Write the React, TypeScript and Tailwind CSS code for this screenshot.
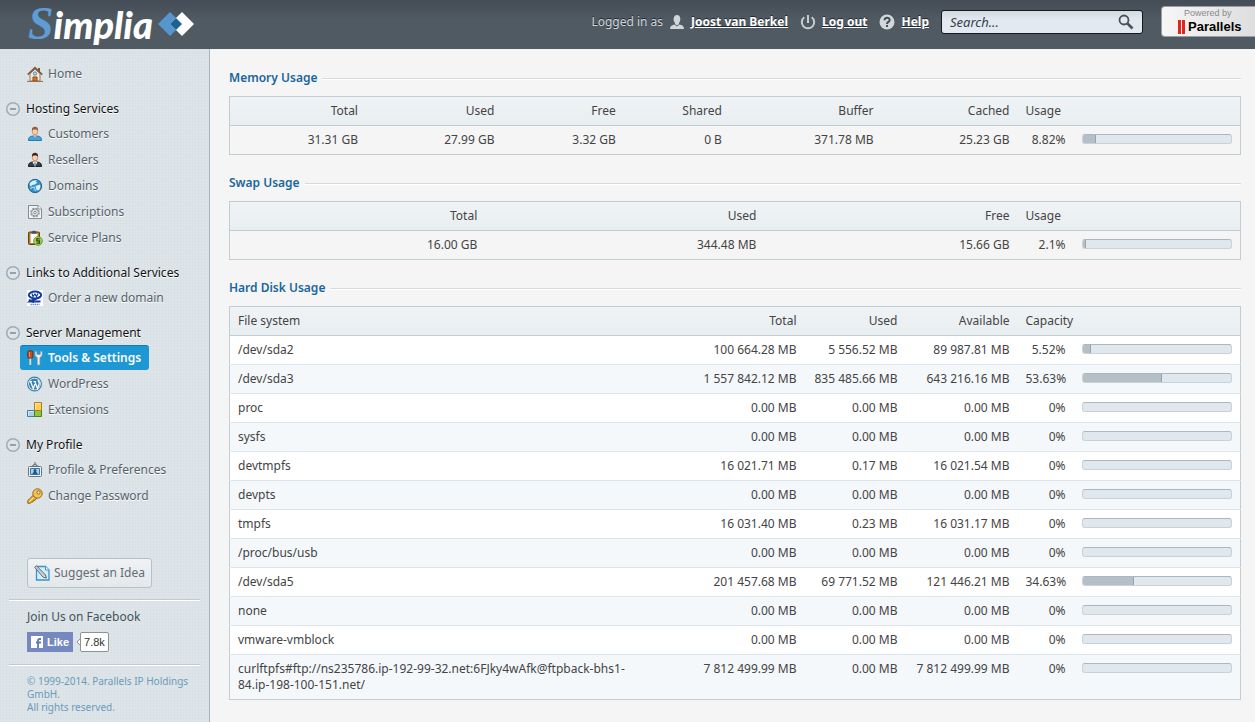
import { ReactNode } from 'react';

interface NavItem {
  label: string;
  icon: ReactNode;
  active?: boolean;
}

interface NavGroup {
  title: string;
  items: NavItem[];
}

// --- Icons ---
const Icon = ({ children }: { children: ReactNode }) => (
  <svg viewBox="0 0 16 16" className="size-4 shrink-0" aria-hidden="true">{children}</svg>
);

const HomeIcon = () => (
  <Icon>
    <path d="M3 7.500 8 3l5 4.500V15H3z" fill="#f3ead6" stroke="#9a7b5c" />
    <path d="M12 2v4" stroke="#7a5a45" strokeWidth="2" />
    <path d="M.8 8.600 8 1.800l7.200 6.800" fill="none" stroke="#7d5b45" strokeWidth="1.800" />
    <circle cx="8" cy="7.500" r="1.600" fill="#bfe0f5" stroke="#3d86b8" />
    <path d="M6 15v-4h4v4z" fill="#d9792e" stroke="#8a4717" />
    <path d="M0 15.400h16" stroke="#8c6c56" />
  </Icon>
);

const PersonIcon = ({ body, edge, hair, suit }: { body: string; edge: string; hair: string; suit?: boolean }) => (
  <Icon>
    <path d="M1.500 14.500c-.3-3 1.200-4 4-4.500h5c2.800.5 4.300 1.500 4 4.500z" fill={body} stroke={edge} />
    {suit && <path d="M5.500 10 8 14.500l2.500-4.500z" fill="#fff" />}
    {suit && <path d="M8 10.500v4" stroke="#3f8fd0" strokeWidth="1.500" />}
    <path d="M6.500 7.500h3v2.800L8 11.500l-1.500-1.200z" fill="#eab391" />
    <ellipse cx="8" cy="5" rx="2.800" ry="3.800" fill="#f8cdb0" stroke="#b77e60" strokeWidth=".7" />
    <path d="M5 4.800C4.600 2 6 .8 8 .8s3.400 1.200 3 4C10 3 6 3 5 4.800z" fill={hair} />
  </Icon>
);

const GlobeIcon = () => (
  <Icon>
    <circle cx="8" cy="8" r="6.700" fill="#2f8fca" stroke="#2c6287" />
    <path d="M2.500 6C4 3 7 1.800 10 2.500L8.500 4l2 .5L8 6.500 5 7 4 9zM8.500 8l4.500-1.500c.8 2.500 0 4.500-1.500 6L9.500 12z" fill="#d9f1fb" />
    <path d="M3 10.500 7 9l1.500 4" fill="none" stroke="#a5dbf3" strokeWidth="1.200" />
  </Icon>
);

const SubscriptionIcon = () => (
  <Icon>
    <path d="M1.500 1.500H11L14.500 5v9.500h-13z" fill="#f2f3f4" stroke="#858d93" />
    <path d="M11 1.500V5h3.500" fill="#fff" stroke="#858d93" />
    <circle cx="8" cy="8.500" r="4.200" fill="none" stroke="#8a9298" strokeWidth="1.200" strokeDasharray="2 1.300" />
    <circle cx="8" cy="8.500" r="3.500" fill="#e4e8ea" stroke="#8a9298" />
    <circle cx="8" cy="8.500" r="1.300" fill="#fff" stroke="#7d868c" />
  </Icon>
);

const PlanIcon = () => (
  <Icon>
    <rect x="1.500" y="2" width="11" height="12.500" rx="1" fill="#b5742a" stroke="#6d4315" />
    <path d="M3.500 3.500h7V13h-7z" fill="#fafafa" />
    <path d="M4.500 3.800V2L6 .8h2L9.500 2v1.800z" fill="#4c5358" />
    <circle cx="11" cy="11" r="4.300" fill="#a4d355" stroke="#6c9a2b" />
    <path d="M12.800 8.800H9.800v2h2.700v2.300H9.500" fill="none" stroke="#27480c" strokeWidth="1.200" />
  </Icon>
);

const OrderIcon = () => (
  <Icon>
    <path d="M0 0h16v16H0z" fill="#fff" />
    <ellipse cx="8" cy="5" rx="6.200" ry="3.500" fill="none" stroke="#113c98" strokeWidth="2" />
    <path d="M13.500 6.500C11 9.500 6 9 2.500 11.500h11M2 9.500c1 1.500 3 2.500 5 2.500" fill="none" stroke="#113c98" strokeWidth="1.800" />
    <path d="m5 3.500 1 3L8 4l1.500 2.500 1.500-3" fill="none" stroke="#113c98" strokeWidth="1.200" />
    <path d="M3.500 14.500h9" stroke="#6f93ce" strokeWidth="1.500" strokeDasharray="1.500 .5" />
  </Icon>
);

const ToolsIcon = () => (
  <Icon>
    <rect x=".8" y=".8" width="5" height="7.500" rx="1.500" fill="#c64b22" stroke="#772812" />
    <path d="M2.500 2v5" stroke="#ef8a62" />
    <path d="M3.300 8.500v6.500" stroke="#d8dde0" strokeWidth="1.800" />
    <path d="M8.500 1C7.300 4 8 6.500 10.300 7.500V15h2.600V7.500c2.300-1 3-3.500 1.800-6.500l-1.400.5V4.500h-3.400v-3z" fill="#eef1f3" stroke="#8b969e" strokeWidth=".7" />
  </Icon>
);

const WordPressIcon = () => (
  <Icon>
    <circle cx="7.500" cy="8" r="6.900" fill="#e8f3fa" stroke="#3b80ae" strokeWidth="1.200" />
    <circle cx="7.500" cy="8" r="5.500" fill="#3b80ae" />
    <path d="M2.500 5.500H5M6.500 5.500H9M3.500 5.500l2.800 7L8 8M7.800 5.500l2.700 7 1.800-5c.4-1.200-1.500-2.200-1-3.500" fill="none" stroke="#fff" strokeWidth="1.200" />
  </Icon>
);

const ExtensionsIcon = () => (
  <Icon>
    <path d="M.5 8.500h7v6h-7z" fill="#a5d0ec" stroke="#477ba0" />
    <path d="M7.500 8.500h7v6h-7z" fill="#91c43d" stroke="#527d1c" />
    <path d="M7.500.5h7v8h-7z" fill="#fbcd59" stroke="#a97f21" />
    <path d="M8.500 7.500v-6h5M1.500 13.500v-4h5" fill="none" stroke="#fff" strokeOpacity=".5" />
  </Icon>
);

const ProfileIcon = () => (
  <Icon>
    <path d="M8 0v3M5 4.500 8 2l3 2.500" fill="none" stroke="#69747b" strokeWidth="1.200" />
    <rect x="1.500" y="4.500" width="13" height="10" rx="1" fill="#eaf0f3" stroke="#69747b" />
    <path d="M3.500 6.500h9v6h-9z" fill="#9fd0f0" stroke="#3976a3" />
    <path d="M5.500 12c0-1.200.8-1.700 1.700-2a1.500 1.500 0 1 1 1.600 0c1 .3 1.700.8 1.700 2z" fill="#1f4f7c" />
  </Icon>
);

const KeyIcon = () => (
  <Icon>
    <path d="M6 7.500.8 12.500v2.700h2.700l1-1.300H6l.3-1.600H8l1.500-2z" fill="#f3b73c" stroke="#8d5d10" />
    <circle cx="10.500" cy="5.500" r="4.700" fill="#f7c34c" stroke="#95651a" />
    <circle cx="11.500" cy="4.500" r="1.600" fill="#e6eef2" stroke="#95651a" />
    <path d="m2 14 5-5" stroke="#fce3a0" />
  </Icon>
);

const IdeaIcon = () => (
  <Icon>
    <path d="M2.500 1.500h9L15 5v10H2.500z" fill="#cfeeff" stroke="#3c93c8" strokeWidth="1.300" />
    <path d="M11.500 1.500V5H15" fill="#fff" stroke="#3c93c8" />
    <path d="m.7 2.300 1.800-1.500 9 9.200.8 3L9 12z" fill="#e8ebec" stroke="#495157" strokeWidth=".9" />
    <path d="m2.500 2.500 8 8.500" stroke="#8c9499" strokeWidth=".7" />
  </Icon>
);

const CollapseIcon = () => (
  <svg viewBox="0 0 16 16" className="size-4" aria-hidden="true">
    <circle cx="8" cy="8" r="6.300" fill="#dde5e9" stroke="#9badb7" strokeWidth="1.500" />
    <path d="M5 8h6" stroke="#7b8c96" strokeWidth="1.500" />
  </svg>
);

const navGroups: NavGroup[] = [
  {
    title: 'Hosting Services',
    items: [
      { label: 'Customers', icon: <PersonIcon body="#48a3da" edge="#2c78a8" hair="#9a5c32" /> },
      { label: 'Resellers', icon: <PersonIcon body="#3a3d41" edge="#1d1f22" hair="#46291a" suit /> },
      { label: 'Domains', icon: <GlobeIcon /> },
      { label: 'Subscriptions', icon: <SubscriptionIcon /> },
      { label: 'Service Plans', icon: <PlanIcon /> },
    ],
  },
  {
    title: 'Links to Additional Services',
    items: [{ label: 'Order a new domain', icon: <OrderIcon /> }],
  },
  {
    title: 'Server Management',
    items: [
      { label: 'Tools & Settings', icon: <ToolsIcon />, active: true },
      { label: 'WordPress', icon: <WordPressIcon /> },
      { label: 'Extensions', icon: <ExtensionsIcon /> },
    ],
  },
  {
    title: 'My Profile',
    items: [
      { label: 'Profile & Preferences', icon: <ProfileIcon /> },
      { label: 'Change Password', icon: <KeyIcon /> },
    ],
  },
];

const disks: [string, string, string, string, number][] = [
  ['/dev/sda2', '100 664.28', '5 556.52', '89 987.81', 5.52],
  ['/dev/sda3', '1 557 842.12', '835 485.66', '643 216.16', 53.63],
  ['proc', '0.00', '0.00', '0.00', 0],
  ['sysfs', '0.00', '0.00', '0.00', 0],
  ['devtmpfs', '16 021.71', '0.17', '16 021.54', 0],
  ['devpts', '0.00', '0.00', '0.00', 0],
  ['tmpfs', '16 031.40', '0.23', '16 031.17', 0],
  ['/proc/bus/usb', '0.00', '0.00', '0.00', 0],
  ['/dev/sda5', '201 457.68', '69 771.52', '121 446.21', 34.63],
  ['none', '0.00', '0.00', '0.00', 0],
  ['vmware-vmblock', '0.00', '0.00', '0.00', 0],
  ['curlftpfs#ftp://ns235786.ip-192-99-32.net:6FJky4wAfk@ftpback-bhs1-84.ip-198-100-151.net/', '7 812 499.99', '0.00', '7 812 499.99', 0],
];

const NavLink = ({ item }: { item: NavItem }) => (
  <a
    href="#"
    className={`flex h-[25px] w-fit items-center gap-[5px] rounded-[3px] pr-2 pl-[7px] whitespace-nowrap ${
      item.active
        ? 'border-t border-[#1579b4] bg-[#1e98d4] font-semibold text-white'
        : 'text-[#55616a] [text-shadow:0_1px_0_#fff]'
    }`}
  >
    {item.icon}
    {item.label}
  </a>
);

const UsageBar = ({ value }: { value: number }) => (
  <div className="h-2.5 w-full overflow-hidden rounded-[3px] border border-[#c9d2d9] border-t-[#acb7c0] bg-[#e0e7ed]">
    {value > 0 && (
      <div className="h-full border-r border-[#97a2ac] bg-[#b5bfc8]" style={{ width: `${value}%` }} />
    )}
  </div>
);

// Percentage followed by its bar, shared by all three tables
const UsageCell = ({ value }: { value: number }) => (
  <td className="px-2 py-1.5 align-top">
    <div className="flex items-start gap-4">
      <span className="w-10 text-right">{value}%</span>
      <div className="flex-1 pt-0.5"><UsageBar value={value} /></div>
    </div>
  </td>
);

const Section = ({ title, children }: { title: string; children: ReactNode }) => (
  <section className="mb-[18px]">
    <div className="mb-2 flex h-5 items-center gap-[5px]">
      <h2 className="font-semibold text-[#1a659e]">{title}</h2>
      <div className="mt-0.5 h-0.5 flex-1 border-t border-[#d8dadb] bg-white" />
    </div>
    {children}
  </section>
);

const tableClass = 'w-full table-fixed border-collapse border border-[#c1ccd3]';
const headClass = 'border-b border-[#c1ccd3] bg-gradient-to-b from-[#eff3f6] to-[#e9eef1]';
const thClass = 'px-2 py-1.5 text-right font-normal whitespace-nowrap';
const tdClass = 'px-2 py-1.5 text-right align-top whitespace-nowrap';

const Divider = () => <div className="mx-[9px] h-0.5 border-t border-[#bfcad0] bg-white" />;

const Header = () => (
  <header className="flex h-[49px] items-start justify-between bg-gradient-to-b from-[#444c56] to-[#505a63] to-40% text-[#d0d6da]">
    <a href="#" aria-label="Simplia" className="flex h-12 items-center gap-[5px] pl-7">
      <span className="flex items-baseline font-['Lato',sans-serif] text-[38px] leading-[44px] font-black text-white italic">
        <span className="font-['Liberation_Serif',serif] text-[46px] font-bold text-[#5f9cd6]">S</span>
        implia
      </span>
      <svg viewBox="0 0 36 24" className="h-6 w-9" aria-hidden="true">
        <path d="m12 0 12 12-12 12L0 12z" fill="#5796cc" />
        <path d="m24 0 12 12-12 12-12-12z" fill="#fff" />
        <path d="m18 6 6 6-6 6-6-6z" fill="#1d638f" />
      </svg>
    </a>
    <div className="flex items-start">
      <nav className="flex h-[43px] items-center whitespace-nowrap [text-shadow:0_-1px_0_#22282d]">
        <span>Logged in as</span>
        <svg viewBox="0 0 16 16" className="mx-1.5 size-4" aria-hidden="true">
          <path d="M1 15c0-3 2-4 5-4.500V9C3.500 6 4.500 1 8 1s4.500 5 2 8v1.500c3 .5 5 1.500 5 4.500z" fill="#d0d5d9" />
          <path d="m6 10.500 2 1.500 2-1.500" fill="none" stroke="#59626a" />
        </svg>
        <a href="#" className="font-bold text-white underline">Joost van Berkel</a>
        <svg viewBox="0 0 16 16" className="mr-1.5 ml-3 size-4" fill="none" stroke="#c6ccd1" strokeWidth="2" aria-hidden="true">
          <path d="M8 1v8M4.300 3.200a6.200 6.200 0 1 0 7.400 0" />
        </svg>
        <a href="#" className="font-bold text-white underline">Log out</a>
        <svg viewBox="0 0 16 16" className="mr-1.5 ml-3 size-4" aria-hidden="true">
          <circle cx="8" cy="8" r="7.500" fill="#d2d7db" />
          <path d="M5.500 6.300C5.500 3 10.700 3 10.700 6c0 2-2.700 1.800-2.700 4M8 11v2" fill="none" stroke="#424c55" strokeWidth="1.900" />
        </svg>
        <a href="#" className="font-bold text-white underline">Help</a>
      </nav>
      <div className="mt-2.5 ml-3 flex h-6 w-[202px] items-center rounded-[3px] border border-[#15191d] bg-gradient-to-b from-[#d2dae2] to-[#e2e9f0] to-40% px-2">
        <input
          type="text"
          aria-label="Search"
          placeholder="Search..."
          className="w-full min-w-0 bg-transparent text-[13px] italic outline-none placeholder:text-[#333e46]"
        />
        <button type="button" aria-label="Run search">
          <svg viewBox="0 0 16 16" className="size-4" fill="none" stroke="#46525c" aria-hidden="true">
            <circle cx="6" cy="6" r="4.500" strokeWidth="1.800" />
            <path d="m9.500 9.500 5 5" strokeWidth="2.600" />
          </svg>
        </button>
      </div>
      <a
        href="#"
        className="mt-1.5 ml-[18px] flex h-[31px] w-[94px] flex-col items-start rounded-l-[4px] border border-r-0 border-[#9c9fa2] bg-gradient-to-r from-[#f6f6f6] to-[#dedede] pl-4 font-['Liberation_Sans',sans-serif]"
      >
        <span className="pl-1.5 text-[9px] leading-[13px] text-[#8a8a8a]">Powered by</span>
        <span className="flex items-center gap-[3px] text-[13px] leading-[14px] font-bold text-black">
          <span className="flex gap-px" aria-hidden="true">
            <span className="h-3.5 w-[3px] bg-[#e4251c]" />
            <span className="h-3.5 w-[3px] bg-[#e4251c]" />
          </span>
          Parallels
        </span>
      </a>
    </div>
  </header>
);

const Sidebar = () => (
  <aside className="w-[210px] shrink-0 border-r border-[#a6b4bc] bg-[#dee5e9] bg-[repeating-linear-gradient(0deg,#ccd7dd33_0_1px,transparent_1px_3px),repeating-linear-gradient(90deg,#ccd7dd33_0_1px,transparent_1px_3px)] pt-3 pb-2">
    <nav>
      <div className="pl-5">
        <NavLink item={{ label: 'Home', icon: <HomeIcon /> }} />
      </div>
      {navGroups.map((group) => (
        <div key={group.title} className="mt-[13px]">
          <div className="flex h-5 items-center gap-[5px] pl-[5px] whitespace-nowrap text-[#111]">
            <button type="button" aria-label={`Collapse ${group.title}`}>
              <CollapseIcon />
            </button>
            <h3 className="[text-shadow:0_1px_0_#fff]">{group.title}</h3>
          </div>
          <ul className="mt-0.5 flex flex-col gap-px pl-5">
            {group.items.map((item) => (
              <li key={item.label}>
                <NavLink item={item} />
              </li>
            ))}
          </ul>
        </div>
      ))}
    </nav>
    <button
      type="button"
      className="mt-[50px] mb-[11px] ml-[27px] flex h-[30px] items-center gap-1 rounded-[3px] border border-[#b3c1ca] bg-gradient-to-b from-[#f0f2f4] to-[#e4e8eb] px-1.5 whitespace-nowrap text-[#616c74]"
    >
      <IdeaIcon />
      Suggest an Idea
    </button>
    <Divider />
    <div className="mt-1.5 mb-3 pl-[27px]">
      <p className="leading-5 text-[#45525b]">Join Us on Facebook</p>
      <div className="mt-[5px] flex h-5 items-center font-['Liberation_Sans',sans-serif] text-[11px]">
        <button type="button" className="flex h-5 items-center gap-1 bg-[#7589c0] px-1 font-bold text-white">
          <svg viewBox="0 0 12 12" className="size-3" aria-hidden="true">
            <path d="M0 0h12v12H0z" fill="#fff" />
            <path d="M7 12V4.500Q7 3 8.500 3H10M5 6.500h5" fill="none" stroke="#6379b5" strokeWidth="1.800" />
          </svg>
          Like
        </button>
        <svg viewBox="0 0 5 8" className="ml-[3px] h-2 w-[5px]" aria-hidden="true">
          <path d="M5 0 1 4l4 4" fill="#fff" stroke="#8c919c" />
        </svg>
        <span className="-ml-px rounded-[2px] border border-[#8c919c] bg-white px-[3px] leading-[18px] text-[#333]">7.8k</span>
      </div>
    </div>
    <Divider />
    <p className="mt-[9px] pr-2 pl-[27px] text-[10px] leading-[13px] text-[#6b9bbb]">
      © 1999-2014. Parallels IP Holdings GmbH.
      <br />
      All rights reserved.
    </p>
  </aside>
);

export default function App() {
  return (
    <div className="flex min-h-screen flex-col bg-[#f5f5f5] font-['Noto_Sans',sans-serif] text-[12px] leading-4 text-[#444]">
      <Header />
      <div className="flex flex-1">
        <Sidebar />
        <main className="min-w-0 flex-1 pt-[19px] pr-3.5 pl-[19px]">
          <Section title="Memory Usage">
            <table className={tableClass}>
              <thead className={headClass}>
                <tr>
                  <th className={`${thClass} w-[13.5%]`}>Total</th>
                  <th className={`${thClass} w-[13.5%]`}>Used</th>
                  <th className={`${thClass} w-[12%]`}>Free</th>
                  <th className={`${thClass} w-[10.5%]`}>Shared</th>
                  <th className={`${thClass} w-[15%]`}>Buffer</th>
                  <th className={thClass}>Cached</th>
                  <th className={`${thClass} w-[223px] text-left!`}>Usage</th>
                </tr>
              </thead>
              <tbody>
                <tr>
                  <td className={tdClass}>31.31 GB</td>
                  <td className={tdClass}>27.99 GB</td>
                  <td className={tdClass}>3.32 GB</td>
                  <td className={tdClass}>0 B</td>
                  <td className={tdClass}>371.78 MB</td>
                  <td className={tdClass}>25.23 GB</td>
                  <UsageCell value={8.82} />
                </tr>
              </tbody>
            </table>
          </Section>

          <Section title="Swap Usage">
            <table className={tableClass}>
              <thead className={headClass}>
                <tr>
                  <th className={`${thClass} w-[25.3%]`}>Total</th>
                  <th className={`${thClass} w-[27.6%]`}>Used</th>
                  <th className={thClass}>Free</th>
                  <th className={`${thClass} w-[223px] text-left!`}>Usage</th>
                </tr>
              </thead>
              <tbody>
                <tr>
                  <td className={tdClass}>16.00 GB</td>
                  <td className={tdClass}>344.48 MB</td>
                  <td className={tdClass}>15.66 GB</td>
                  <UsageCell value={2.1} />
                </tr>
              </tbody>
            </table>
          </Section>

          <Section title="Hard Disk Usage">
            <table className={tableClass}>
              <thead className={headClass}>
                <tr>
                  <th className={`${thClass} text-left!`}>File system</th>
                  <th className={`${thClass} w-[112px]`}>Total</th>
                  <th className={`${thClass} w-[101px]`}>Used</th>
                  <th className={`${thClass} w-[112px]`}>Available</th>
                  <th className={`${thClass} w-[223px] text-left!`}>Capacity</th>
                </tr>
              </thead>
              <tbody>
                {disks.map(([name, total, used, available, capacity]) => (
                  <tr key={name} className="border-b border-[#dde5ec] odd:bg-white even:bg-[#f4f8fb] last:border-[#c1ccd3]">
                    <td className="py-1.5 pr-12 pl-2 text-left align-top break-words">{name}</td>
                    <td className={tdClass}>{total} MB</td>
                    <td className={tdClass}>{used} MB</td>
                    <td className={tdClass}>{available} MB</td>
                    <UsageCell value={capacity} />
                  </tr>
                ))}
              </tbody>
            </table>
          </Section>
        </main>
      </div>
    </div>
  );
}
